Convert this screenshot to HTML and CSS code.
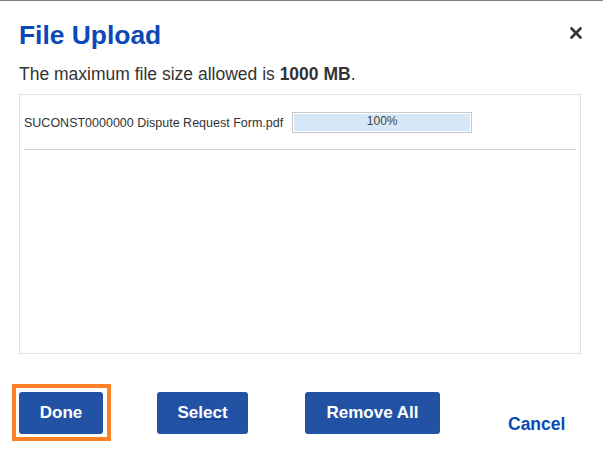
FILE: index.html
```html
<!DOCTYPE html>
<html lang="en">
<head>
<meta charset="utf-8">
<title>File Upload</title>
<link rel="stylesheet" href="styles.css">
</head>
<body>
<div class="dialog">
  <div class="header">
    <h1 class="title">File Upload</h1>
    <button class="close" aria-label="Close">
      <svg width="12" height="12" viewBox="0 0 12 12"><path d="M1.5 1.5 L10.5 10.5 M10.5 1.5 L1.5 10.5" stroke="#333" stroke-width="2.6" stroke-linecap="round"/></svg>
    </button>
  </div>
  <p class="info">The maximum file size allowed is <b>1000 MB</b>.</p>
  <div class="filebox">
    <div class="filerow">
      <span class="filename">SUCONST0000000 Dispute Request Form.pdf</span>
      <div class="progress"><div class="progress-fill">100%</div></div>
    </div>
  </div>
  <div class="actions">
    <div class="focus-ring"><button class="btn btn-done">Done</button></div>
    <button class="btn btn-select"><span class="u">Select</span></button>
    <button class="btn btn-remove">Remove All</button>
    <a class="cancel" href="#">Cancel</a>
  </div>
</div>
</body>
</html>
```
FILE: styles.css
```css
html, body {
  margin: 0;
  padding: 0;
  background: #fff;
}
body {
  border-top: 1px solid #808080;
  font-family: "Liberation Sans", Arial, sans-serif;
  color: #333;
}
.dialog {
  padding: 19px 22px 0 19px;
}
.header {
  display: flex;
  justify-content: space-between;
  align-items: flex-start;
}
.title {
  margin: 0;
  font-size: 26.4px;
  line-height: 30px;
  font-weight: bold;
  color: #0c48b6;
}
.close {
  margin: 7px -1px 0 0;
  padding: 0;
  border: 0;
  background: none;
  width: 12px;
  height: 12px;
  display: block;
}
.close svg { display: block; }
.info {
  margin: 14px 0 0 0;
  font-size: 17.5px;
  line-height: 20px;
  color: #333;
}
.filebox {
  margin-top: 10px;
  height: 258px;
  border: 1px solid #e2e2e2;
  padding: 0 4px;
}
.filerow {
  display: flex;
  align-items: center;
  padding: 17px 0 16px;
  border-bottom: 1px solid #d4d4d4;
}
.filename {
  font-size: 12.5px;
  line-height: 16px;
  color: #333;
  margin-top: 1px;
}
.progress {
  margin-left: 9px;
  border: 1px solid #c8c8c8;
  padding: 1px;
  width: 176px;
  height: 17px;
}
.progress-fill {
  height: 100%;
  background: #d6e8f8;
  font-size: 12px;
  line-height: 14px;
  text-align: center;
  color: #444;
}
.actions {
  display: flex;
  align-items: flex-end;
  margin-top: 30px;
  margin-left: -7px;
}
.focus-ring {
  border: 4px solid #ff8025;
  padding: 4px 4px 3px 3px;
  display: flex;
}
.btn {
  height: 42px;
  border: 0;
  border-radius: 3px;
  background: #2252a3;
  color: #fff;
  font-family: "Liberation Sans", Arial, sans-serif;
  font-weight: bold;
  font-size: 17px;
  padding: 0 20px;
}
.btn-done {
  width: 84px;
}
.btn-select {
  width: 91px;
  margin-left: 46px;
  margin-bottom: 7px;
}
.btn-select .u {
  text-decoration: underline;
  text-decoration-color: #1a3c80;
}
.btn-remove {
  width: 135px;
  margin-left: 57px;
  margin-bottom: 7px;
}
.cancel {
  margin-left: 68px;
  margin-bottom: 7px;
  font-size: 17.5px;
  line-height: 20px;
  font-weight: bold;
  color: #0c48b6;
  text-decoration: none;
}
```
